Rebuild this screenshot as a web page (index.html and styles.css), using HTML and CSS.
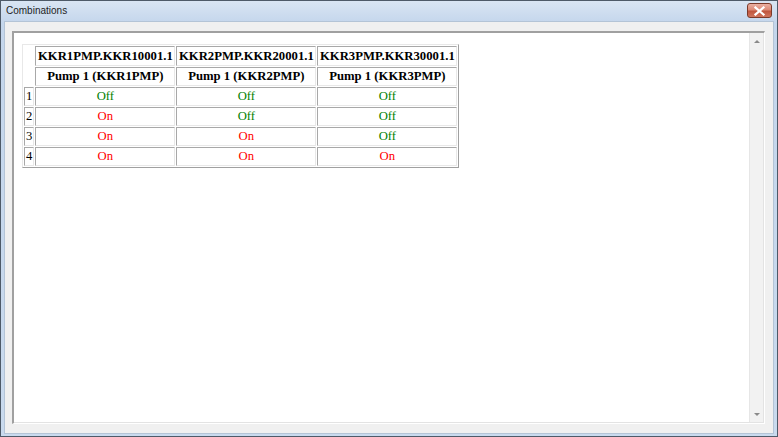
FILE: index.html
```html
<!DOCTYPE html>
<html>
<head>
<meta charset="utf-8">
<link rel="stylesheet" href="styles.css">
</head>
<body>
<div class="window">
  <div class="titlebar">
    <span class="title">Combinations</span>
    <div class="close">
      <svg width="11" height="10" viewBox="0 0 11 10"><path d="M1.5 1.5 L9.5 8.5 M9.5 1.5 L1.5 8.5" stroke="#fff" stroke-width="2.2" stroke-linecap="square"/></svg>
    </div>
  </div>
  <div class="client">
    <div class="panel">
      <div class="content">
        <table class="grid">
          <tr class="hdr">
            <td class="corner" rowspan="2"></td>
            <td class="h h1">KKR1PMP.KKR10001.1</td>
            <td class="h h1">KKR2PMP.KKR20001.1</td>
            <td class="h h1">KKR3PMP.KKR30001.1</td>
          </tr>
          <tr class="hdr">
            <td class="h">Pump 1 (KKR1PMP)</td>
            <td class="h">Pump 1 (KKR2PMP)</td>
            <td class="h">Pump 1 (KKR3PMP)</td>
          </tr>
          <tr><td class="idx">1</td><td class="off">Off</td><td class="off">Off</td><td class="off">Off</td></tr>
          <tr><td class="idx">2</td><td class="on">On</td><td class="off">Off</td><td class="off">Off</td></tr>
          <tr><td class="idx">3</td><td class="on">On</td><td class="on">On</td><td class="off">Off</td></tr>
          <tr><td class="idx">4</td><td class="on">On</td><td class="on">On</td><td class="on">On</td></tr>
        </table>
      </div>
      <div class="scrollbar">
        <div class="arrow up"></div>
        <div class="track"></div>
        <div class="arrow down"></div>
      </div>
    </div>
  </div>
</div>
</body>
</html>
```
FILE: styles.css
```css
html, body {
  margin: 0;
  padding: 0;
  width: 778px;
  height: 437px;
  overflow: hidden;
  background: #f0f0f0;
}
.window {
  box-sizing: border-box;
  width: 778px;
  height: 437px;
  border: 1px solid #4e5a68;
  background: linear-gradient(#d9e5f3, #c4d6ec 22px, #c9daee);
  display: flex;
  flex-direction: column;
  padding: 0 3px 2px 3px;
}
.titlebar {
  height: 20px;
  display: flex;
  align-items: center;
  justify-content: space-between;
  flex: none;
}
.title {
  font-family: "Liberation Sans", Arial, sans-serif;
  font-size: 10px;
  color: #1e1e1e;
  padding-left: 2px;
  margin-top: -1px;
}
.close {
  width: 23px;
  height: 13px;
  margin-right: 2px;
  margin-top: -1px;
  border: 1px solid #7b3a2a;
  border-radius: 3px;
  background: linear-gradient(#eab0a2, #dc8a76 45%, #c0553d 55%, #d0765e);
  display: flex;
  align-items: center;
  justify-content: center;
}
.close svg { display: block; }
.client {
  flex: 1;
  background: #f0f0f0;
  border: 1px solid #b4c4d6;
  padding: 9px 8px 9px 7px;
  display: flex;
  min-height: 0;
}
.panel {
  flex: 1;
  display: flex;
  background: #fff;
  border-top: 2px solid #a0a0a0;
  border-left: 2px solid #a0a0a0;
  border-right: 1px solid #fff;
  border-bottom: 1px solid #fff;
  box-shadow: inset -1px -1px 0 #e3e3e3;
  min-height: 0;
}
.content {
  flex: 1;
  padding: 11px 8px;
}
.scrollbar {
  width: 13px;
  background: #f2f2f2;
  border-left: 1px solid #e6e6e6;
  display: flex;
  flex-direction: column;
  margin: 0 1px 1px 0;
}
.track { flex: 1; }
.arrow {
  height: 12px;
  display: flex;
  align-items: center;
  justify-content: center;
}
.arrow::before {
  content: "";
  width: 0;
  height: 0;
  border-left: 3px solid transparent;
  border-right: 3px solid transparent;
}
.arrow.up::before { border-bottom: 3px solid #8a8a8a; margin-top: 4px; }
.arrow.down::before { border-top: 3px solid #8a8a8a; margin-bottom: 4px; }

.grid {
  border-collapse: separate;
  border-spacing: 1px;
  border: 1px solid;
  border-color: #e8e8e8 #a0a0a0 #a0a0a0 #e8e8e8;
  font-family: "Liberation Serif", "Times New Roman", serif;
  font-size: 12.7px;
}
.grid td {
  border: 1px solid;
  border-color: #a8a8a8 #e8e8e8 #e8e8e8 #a8a8a8;
  padding: 0 1px;
  height: 17px;
  text-align: center;
  line-height: 17px;
  white-space: nowrap;
}
.grid td.corner { border-color: transparent; }
.grid td.h { font-weight: bold; color: #000; height: 17px; line-height: 17px; width: 136px; }
.grid td.h.h1 { height: 16px; line-height: 17px; padding-top: 1px; }
.grid td.idx { padding: 0 1px; color: #000; text-align: left; }
.grid td.off { color: #008000; }
.grid td.on { color: #ff0000; }
```
